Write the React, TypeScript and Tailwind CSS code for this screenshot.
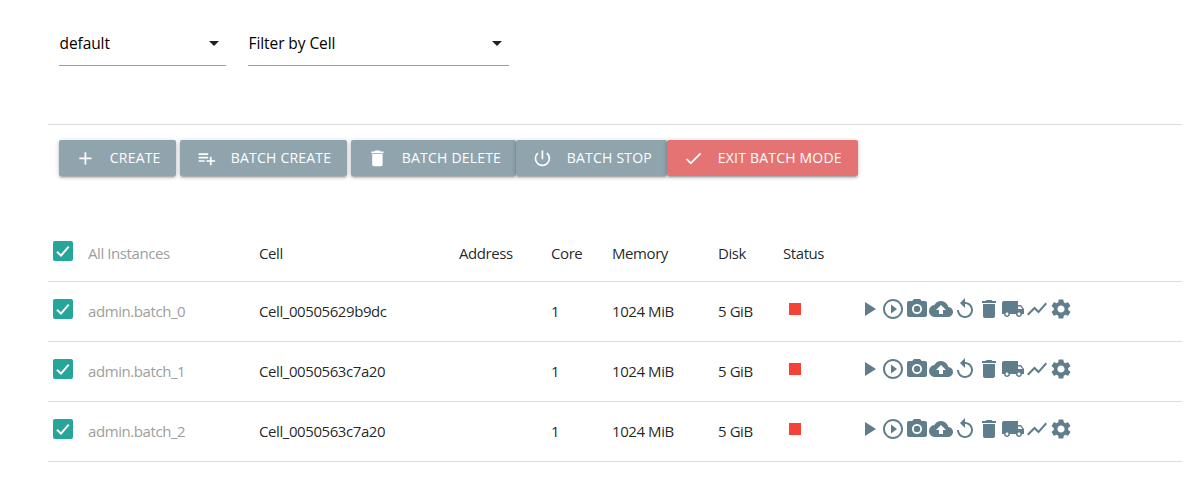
import React from "react";
import {
  MdAdd, MdPlaylistAdd, MdDelete, MdPowerSettingsNew, MdCheck, MdArrowDropDown,
  MdPlayArrow, MdPlayCircleOutline, MdCameraAlt, MdCloudUpload, MdReplay,
  MdLocalShipping, MdShowChart, MdSettings, MdStop,
} from "react-icons/md";
import type { IconType } from "react-icons";

const columns = "grid grid-cols-[40px_171px_200px_92px_61px_106px_65px_74px_1fr] border-b border-[#dcdcdc]";
const cell = "pt-[18px] leading-[22px] whitespace-nowrap";

const instances = [
  { name: "admin.batch_0", cell: "Cell_00505629b9dc" },
  { name: "admin.batch_1", cell: "Cell_0050563c7a20" },
  { name: "admin.batch_2", cell: "Cell_0050563c7a20" },
];

const actions: IconType[] = [
  MdPlayArrow, MdPlayCircleOutline, MdCameraAlt, MdCloudUpload, MdReplay,
  MdDelete, MdLocalShipping, MdShowChart, MdSettings,
];

function Select({ label, className }: { label: string; className: string }) {
  return (
    <div className={`flex h-[45px] items-center justify-between border-b border-[#9e9e9e] text-black ${className}`}>
      <span className="pt-px pl-[0.5px] text-[15.5px] font-[370] tracking-[-0.08px]">{label}</span>
      <MdArrowDropDown className="size-6 text-[#212121]" />
    </div>
  );
}

function Button({ icon: Icon, label, className }: { icon: IconType; label: string; className: string }) {
  return (
    <button className={`flex h-9 items-center rounded-[2px] pl-4 text-[14px] font-normal tracking-[0.2px] text-white shadow-[0_2px_2px_0_rgba(0,0,0,0.14),0_3px_1px_-2px_rgba(0,0,0,0.12),0_1px_5px_0_rgba(0,0,0,0.2)] ${className}`}>
      <Icon className="size-[20.8px] shrink-0" />
      <span className="ml-[14px] pb-0.5 whitespace-nowrap">{label}</span>
    </button>
  );
}

function Checkbox() {
  return (
    <span className="mt-[17px] ml-[5px] size-5 rounded-[2px] bg-[#26a69a]">
      <svg viewBox="0 0 20 20" className="size-5" fill="none" stroke="white" strokeWidth="2">
        <path d="M4 10.8 8 14.6 15.7 5.6" />
      </svg>
    </span>
  );
}

export default function App() {
  return (
    <main className="h-[485px] overflow-hidden bg-white pr-[11px] pl-12 font-['Open_Sans',sans-serif] text-[15px] font-[370] tracking-[-0.42px] text-black/87">
      <div className="flex h-[125px] gap-[22px] border-b border-[#dcdcdc] pt-[21px] pl-[11px]">
        <Select label="default" className="w-[167px]" />
        <Select label="Filter by Cell" className="w-[261px]" />
      </div>

      <div className="flex pt-[15px] pl-[11px]">
        <Button icon={MdAdd} label="CREATE" className="mr-1 w-[117px] bg-[#90a4ae]" />
        <Button icon={MdPlaylistAdd} label="BATCH CREATE" className="mr-1 w-[167px] bg-[#90a4ae]" />
        <Button icon={MdDelete} label="BATCH DELETE" className="w-[165px] bg-[#90a4ae]" />
        <Button icon={MdPowerSettingsNew} label="BATCH STOP" className="w-[151px] bg-[#90a4ae]" />
        <Button icon={MdCheck} label="EXIT BATCH MODE" className="w-[191px] bg-[#e57373]" />
      </div>

      <section className="pt-12">
        <div className={`${columns} h-[58px]`}>
          <Checkbox />
          <span className={`${cell} text-[#9e9e9e]`}>All Instances</span>
          <span className={cell}>Cell</span>
          <span className={cell}>Address</span>
          <span className={cell}>Core</span>
          <span className={cell}>Memory</span>
          <span className={cell}>Disk</span>
          <span className={cell}>Status</span>
        </div>
        {instances.map((item) => (
          <div key={item.name} className={`${columns} h-[60px]`}>
            <Checkbox />
            <span className={`${cell} text-[#9e9e9e]`}>{item.name}</span>
            <span className={cell}>{item.cell}</span>
            <span />
            <span className={cell}>1</span>
            <span className={cell}>1024 MiB</span>
            <span className={cell}>5 GiB</span>
            <MdStop className="mt-[15px] size-6 text-[#f44336]" />
            <div className="mt-[15px] flex text-[#607d8b]">
              {actions.map((Icon, i) => (
                <Icon key={i} className="size-6 shrink-0" />
              ))}
            </div>
          </div>
        ))}
      </section>
    </main>
  );
}
